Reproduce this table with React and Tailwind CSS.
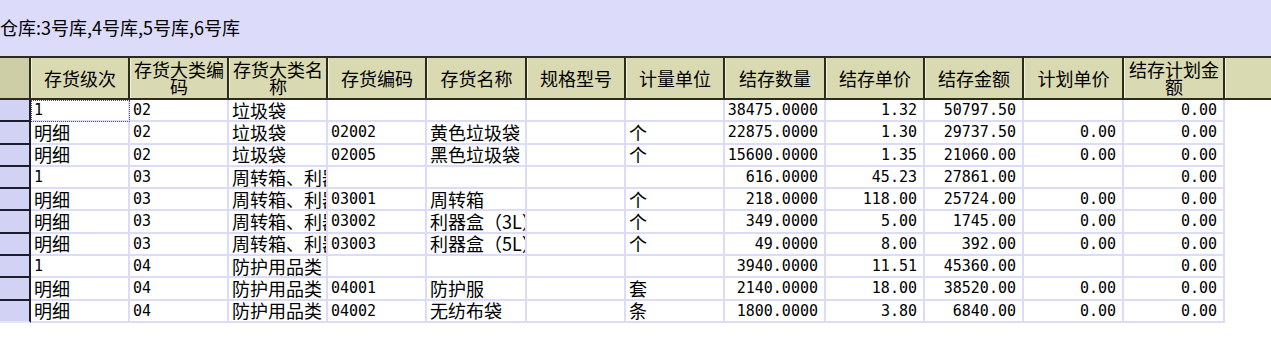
const columns = [
  { label: '存货级次', w: 'w-[99px]' },
  { label: '存货大类编码', w: 'w-[99px]' },
  { label: '存货大类名称', w: 'w-[99px]' },
  { label: '存货编码', w: 'w-[99px]' },
  { label: '存货名称', w: 'w-[100px]' },
  { label: '规格型号', w: 'w-[99px]' },
  { label: '计量单位', w: 'w-[99px]' },
  { label: '结存数量', w: 'w-[101px]', right: true },
  { label: '结存单价', w: 'w-[99px]', right: true },
  { label: '结存金额', w: 'w-[99px]', right: true },
  { label: '计划单价', w: 'w-[100px]', right: true },
  { label: '结存计划金额', w: 'w-[101px]', right: true },
]

const rows = [
  ['1', '02', '垃圾袋', '', '', '', '', '38475.0000', '1.32', '50797.50', '', '0.00'],
  ['明细', '02', '垃圾袋', '02002', '黄色垃圾袋', '', '个', '22875.0000', '1.30', '29737.50', '0.00', '0.00'],
  ['明细', '02', '垃圾袋', '02005', '黑色垃圾袋', '', '个', '15600.0000', '1.35', '21060.00', '0.00', '0.00'],
  ['1', '03', '周转箱、利器盒', '', '', '', '', '616.0000', '45.23', '27861.00', '', '0.00'],
  ['明细', '03', '周转箱、利器盒', '03001', '周转箱', '', '个', '218.0000', '118.00', '25724.00', '0.00', '0.00'],
  ['明细', '03', '周转箱、利器盒', '03002', '利器盒（3L）', '', '个', '349.0000', '5.00', '1745.00', '0.00', '0.00'],
  ['明细', '03', '周转箱、利器盒', '03003', '利器盒（5L）', '', '个', '49.0000', '8.00', '392.00', '0.00', '0.00'],
  ['1', '04', '防护用品类', '', '', '', '', '3940.0000', '11.51', '45360.00', '', '0.00'],
  ['明细', '04', '防护用品类', '04001', '防护服', '', '套', '2140.0000', '18.00', '38520.00', '0.00', '0.00'],
  ['明细', '04', '防护用品类', '04002', '无纺布袋', '', '条', '1800.0000', '3.80', '6840.00', '0.00', '0.00'],
]

const isAscii = (s) => /^[\x20-\x7e]*$/.test(s)

function Cell({ value, col, focused }) {
  const ascii = isAscii(value)
  return (
    <div
      className={`${col.w} shrink-0 flex items-center overflow-hidden whitespace-nowrap border-r-2 border-b-2 border-[#dcdcfa] bg-white ${
        col.right ? 'justify-end pr-[6px]' : 'justify-start pl-[3px]'
      } ${focused ? 'outline-1 outline-dotted outline-[#555] -outline-offset-1' : ''}`}
    >
      <span
        className={
          ascii
            ? "font-['DejaVu_Sans_Mono',monospace] text-[15px]"
            : "font-['Noto_Sans_CJK_SC',sans-serif] text-[18px]"
        }
      >
        {value}
      </span>
    </div>
  )
}

export default function App() {
  return (
    <div className="w-[1271px] h-[355px] overflow-hidden bg-white text-black font-['Noto_Sans_CJK_SC',sans-serif]">
      {/* Filter bar */}
      <div className="h-[56px] bg-[#dcdcfa] flex items-center text-[18px] leading-none pb-[2px]">
        仓库:3号库,4号库,5号库,6号库
      </div>

      {/* Header */}
      <div className="flex h-[44px] border-t-2 border-b-2 border-[#2c2c1c] bg-[#dadab2] text-[18px]">
        <div className="w-[31px] shrink-0 bg-[#cdcda6] border-r-2 border-[#2c2c1c]" />
        {columns.map((col) => (
          <div
            key={col.label}
            className={`${col.w} shrink-0 flex items-center justify-center text-center leading-[17px] border-l border-l-[#f2f2da] border-r-2 border-r-[#2c2c1c] overflow-hidden`}
          >
            {col.label}
          </div>
        ))}
        <div className="flex-1 border-l border-l-[#f2f2da]" />
      </div>

      {/* Rows */}
      <div className="flex flex-col">
        {rows.map((row, ri) => (
          <div key={ri} className="flex h-[22.3px]">
            <div
              className={`w-[31px] shrink-0 bg-[#d2d2f4] border-r-2 border-r-[#1c1c2c] ${
                ri < rows.length - 1 ? 'border-b-2 border-b-[#1c1c2c]' : 'border-b-2 border-b-[#e4e4fa]'
              }`}
            />
            {row.map((value, ci) => (
              <Cell key={ci} value={value} col={columns[ci]} focused={ri === 0 && ci === 0} />
            ))}
          </div>
        ))}
      </div>
    </div>
  )
}
